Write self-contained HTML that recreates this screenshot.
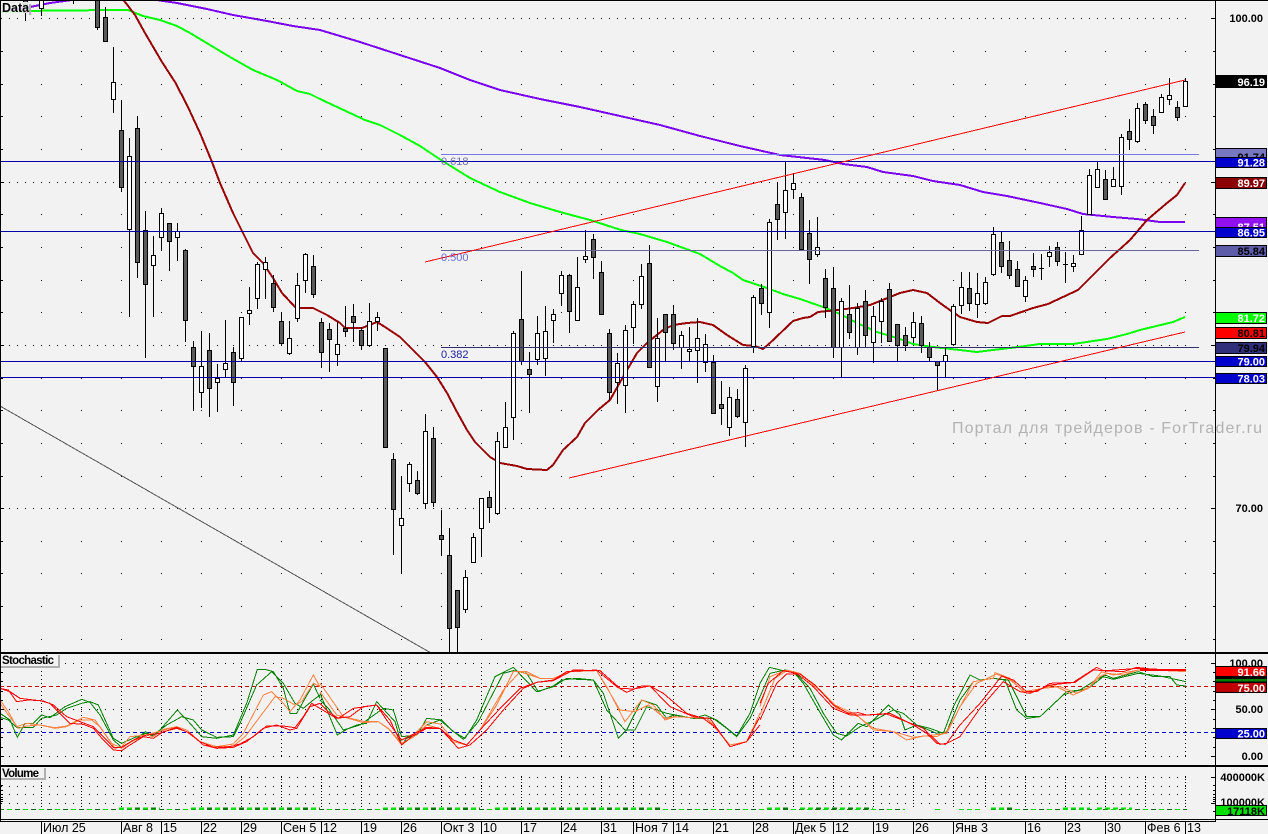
<!DOCTYPE html>
<html><head><meta charset="utf-8"><title>Chart</title>
<style>
html,body{margin:0;padding:0;background:#f2f2f2;overflow:hidden}
svg{display:block}
.l{font:bold 11px "Liberation Sans",sans-serif;text-anchor:end}
.t{font:12.5px "Liberation Sans",sans-serif;fill:#000}
.f{font:11px "Liberation Sans",sans-serif}
.p{font:bold 11.5px "Liberation Sans",sans-serif;fill:#000}
polyline{fill:none;stroke-width:1;vector-effect:non-scaling-stroke}
</style></head><body>
<svg width="1268" height="834" viewBox="0 0 1268 834" xmlns="http://www.w3.org/2000/svg" shape-rendering="crispEdges">
<rect width="1268" height="834" fill="#f2f2f2"/>

<!-- grid main -->
<path id="r" stroke="#000" d="M41 .5h1M81 .5h1M121 .5h1M161 .5h1M201 .5h1M241 .5h1M281 .5h1M321 .5h1M361 .5h1M401 .5h1M441 .5h1M481 .5h1M521 .5h1M561 .5h1M601 .5h1M633 .5h1M673 .5h1M713 .5h1M753 .5h1M793 .5h1M833 .5h1M873 .5h1M913 .5h1M953 .5h1M985 .5h1M1025 .5h1M1065 .5h1M1105 .5h1M1145 .5h1M1185 .5h1"/>
<g>
<use href="#r" y="51"/><use href="#r" y="84"/><use href="#r" y="116"/><use href="#r" y="149"/><use href="#r" y="214"/><use href="#r" y="247"/><use href="#r" y="280"/><use href="#r" y="312"/><use href="#r" y="378"/><use href="#r" y="410"/><use href="#r" y="443"/><use href="#r" y="476"/><use href="#r" y="541"/><use href="#r" y="573"/><use href="#r" y="606"/><use href="#r" y="639"/>
</g>
<path stroke="#000" stroke-dasharray="1 7" fill="none" d="M1 18.5H1190M1 182.5H1190M1 345.5H1190M1 508.5H1190"/>

<text x="952" y="433" font-family="Liberation Sans,sans-serif" font-size="16" fill="#b2b2b2" textLength="310">Портал для трейдеров - ForTrader.ru</text>

<!-- moving averages -->
<g fill="none" stroke-width="2" stroke-linejoin="round">
<polyline style="stroke-width:2" stroke="#7a00f0" points="0,12 30,7 50,3 72,0 75,-2"/>
<polyline style="stroke-width:2" stroke="#7a00f0" points="150,-1 177,3 207,9 233,15 267,21 293,26 320,30 360,42 400,55 440,68 470,80 500,90 540,99 580,107 620,116 660,125 700,136 740,146 780,155 825,160 843,164 867,167 883,172 913,176 933,181 960,185 983,192 1007,196 1040,203 1067,209 1083,214 1113,217 1137,219 1160,222 1185,222"/>
<polyline style="stroke-width:2" stroke="#00ff00" points="0,12 50,10.5 128,10 143,16 160,20 177,26 190,33 210,45 230,57 253,70 277,80 297,91 310,94 320,99 365,120 380,125 400,135 420,146 441,160 470,178 500,192 530,203 560,212 590,220 621,230 640,234 667,242 700,254 720,266 733,273 743,280 767,288 783,294 800,299 823,307 840,314 857,323 877,332 897,338 913,344 933,347 960,350 977,352 993,350 1018,347 1040,344 1073,344 1107,339 1127,334 1140,330 1173,322 1185,317"/>
<polyline style="stroke-width:2" stroke="#990000" points="122,-2 135,15 145,33 162,62 175,82 187,105 200,133 212,162 220,183 233,213 243,233 253,253 263,263 273,278 282,293 295,307 300,308 313,308 327,315 340,323 345,328 362,328 377,322 385,327 400,337 413,350 425,362 437,377 447,393 457,412 467,430 475,442 490,457 500,463 517,466 527,469 547,470 553,465 563,450 577,437 585,423 598,410 610,400 623,377 637,353 647,343 663,330 673,325 687,323 700,322 713,325 727,335 743,345 755,346 763,349 770,343 793,321 803,318 810,317 818,312 838,310 853,308 870,305 880,301 900,293 913,290 927,293 940,303 947,308 960,317 977,322 988,323 1002,316 1010,316 1033,308 1048,304 1063,297 1078,290 1093,275 1110,258 1130,240 1147,220 1167,203 1177,195 1185,183"/>
</g>

<!-- candles wicks -->
<path stroke="#000" fill="none" d="M25.5 0V21M41.5 0V16M73.5 0V4M97.5 0V30M105.5 7V42M113.5 47V113M121.5 100V192M129.5 138V317M137.5 116V278M145.5 211V358M153.5 236V317M161.5 208V251M169.5 223V271M177.5 223V261M185.5 249V342M193.5 341V411M201.5 331V408M209.5 333V417M217.5 364V412M225.5 320V377M233.5 347V406M241.5 317V361M249.5 287V325M257.5 262V309M265.5 257V299M273.5 275V312M281.5 312V346M289.5 321V355M297.5 273V322M305.5 253V293M313.5 255V298M321.5 318V368M329.5 323V372M337.5 322V366M345.5 306V337M353.5 304V342M361.5 327V350M369.5 303V347M377.5 312V331M385.5 348V447M393.5 453V555M401.5 476V573M409.5 462V492M417.5 471V495M425.5 414V509M433.5 427V507M441.5 510V556M449.5 528V653M457.5 590V653M465.5 570V613M473.5 533V563M481.5 498V557M489.5 491V523M497.5 432V515M505.5 402V448M513.5 331V440M521.5 271V365M529.5 352V413M537.5 316V365M545.5 306V376M553.5 309V343M561.5 271V306M569.5 274V333M577.5 257V320M585.5 230V263M593.5 234V279M601.5 261V314M609.5 329V400M617.5 353V404M625.5 325V413M633.5 301V344M641.5 264V309M649.5 245V367M657.5 318V402M665.5 314V361M673.5 305V350M681.5 331V369M689.5 327V361M697.5 318V383M705.5 334V372M713.5 355V413M721.5 381V425M729.5 387V436M737.5 389V418M745.5 365V447M753.5 295V353M761.5 284V315M769.5 219V328M777.5 182V240M785.5 162V239M793.5 173V199M801.5 193V249M809.5 220V284M817.5 217V257M825.5 269V318M833.5 267V358M841.5 298V377M849.5 285V339M857.5 303V355M865.5 290V347M873.5 306V363M881.5 298V343M889.5 283V341M897.5 324V361M905.5 327V351M913.5 312V343M921.5 316V353M929.5 342V361M937.5 361V391M945.5 348V377M953.5 304V344M961.5 272V314M969.5 272V311M977.5 273V318M985.5 277V305M993.5 227V276M1001.5 231V273M1009.5 241V279M1017.5 261V286M1025.5 276V302M1033.5 253V277M1041.5 254V280M1049.5 246V267M1057.5 242V266M1065.5 252V283M1073.5 255V272M1081.5 216V254M1089.5 169V214M1097.5 161V187M1105.5 170V199M1113.5 167V187M1121.5 134V195M1129.5 119V150M1137.5 103V143M1145.5 102V124M1153.5 109V134M1161.5 94V112M1169.5 78V105M1177.5 101V121M1185.5 78V106M1039 268.5h5M1063 264.5h5"/>
<!-- dark bodies -->
<path fill="#5a5a5a" stroke="#000" d="M23.5-1h4V12.5h-4zM95.5-1h4V27.5h-4zM103.5 17.5h4V41.5h-4zM119.5 130.5h4V187.5h-4zM135.5 128.5h4V262.5h-4zM143.5 230.5h4V284.5h-4zM167.5 223.5h4V241.5h-4zM183.5 250.5h4V320.5h-4zM191.5 347.5h4V366.5h-4zM207.5 350.5h4V388.5h-4zM231.5 352.5h4V382.5h-4zM271.5 283.5h4V307.5h-4zM279.5 321.5h4V343.5h-4zM311.5 266.5h4V294.5h-4zM319.5 322.5h4V352.5h-4zM327.5 329.5h4V339.5h-4zM343.5 328.5h4V331.5h-4zM351.5 316.5h4V322.5h-4zM359.5 330.5h4V345.5h-4zM383.5 348.5h4V447.5h-4zM391.5 459.5h4V509.5h-4zM415.5 480.5h4V493.5h-4zM431.5 438.5h4V502.5h-4zM439.5 535.5h4V539.5h-4zM447.5 555.5h4V628.5h-4zM455.5 590.5h4V627.5h-4zM487.5 497.5h4V507.5h-4zM519.5 319.5h4V361.5h-4zM527.5 369.5h4V374.5h-4zM567.5 275.5h4V311.5h-4zM591.5 239.5h4V257.5h-4zM599.5 272.5h4V314.5h-4zM607.5 333.5h4V392.5h-4zM647.5 263.5h4V367.5h-4zM663.5 314.5h4V332.5h-4zM671.5 314.5h4V343.5h-4zM711.5 362.5h4V413.5h-4zM719.5 404.5h4V408.5h-4zM735.5 399.5h4V416.5h-4zM759.5 288.5h4V303.5h-4zM775.5 204.5h4V219.5h-4zM799.5 197.5h4V249.5h-4zM807.5 233.5h4V259.5h-4zM823.5 278.5h4V307.5h-4zM831.5 288.5h4V347.5h-4zM847.5 314.5h4V332.5h-4zM863.5 301.5h4V335.5h-4zM887.5 289.5h4V341.5h-4zM895.5 324.5h4V345.5h-4zM903.5 335.5h4V345.5h-4zM919.5 323.5h4V345.5h-4zM927.5 347.5h4V357.5h-4zM935.5 361.5h4V365.5h-4zM967.5 288.5h4V303.5h-4zM999.5 242.5h4V266.5h-4zM1007.5 260.5h4V275.5h-4zM1015.5 269.5h4V286.5h-4zM1031.5 266.5h4V269.5h-4zM1055.5 247.5h4V261.5h-4zM1103.5 179.5h4V199.5h-4zM1127.5 131.5h4V139.5h-4zM1143.5 104.5h4V120.5h-4zM1151.5 116.5h4V125.5h-4zM1175.5 107.5h4V117.5h-4z"/>
<!-- white bodies -->
<path fill="#fff" stroke="#000" d="M39.5-1h4V8.5h-4zM111.5 82.5h4V99.5h-4zM127.5 156.5h4V229.5h-4zM151.5 255.5h4V265.5h-4zM159.5 213.5h4V237.5h-4zM175.5 231.5h4V237.5h-4zM199.5 366.5h4V392.5h-4zM215.5 378.5h4V382.5h-4zM223.5 363.5h4V369.5h-4zM239.5 317.5h4V358.5h-4zM247.5 310.5h4V313.5h-4zM255.5 264.5h4V298.5h-4zM263.5 262.5h4V269.5h-4zM287.5 338.5h4V353.5h-4zM295.5 285.5h4V318.5h-4zM303.5 254.5h4V280.5h-4zM335.5 344.5h4V354.5h-4zM367.5 321.5h4V345.5h-4zM375.5 317.5h4V321.5h-4zM399.5 518.5h4V525.5h-4zM407.5 464.5h4V483.5h-4zM423.5 431.5h4V503.5h-4zM463.5 577.5h4V609.5h-4zM471.5 537.5h4V562.5h-4zM479.5 498.5h4V528.5h-4zM495.5 441.5h4V513.5h-4zM503.5 427.5h4V447.5h-4zM511.5 333.5h4V417.5h-4zM535.5 333.5h4V359.5h-4zM543.5 331.5h4V358.5h-4zM551.5 314.5h4V320.5h-4zM559.5 275.5h4V293.5h-4zM575.5 287.5h4V320.5h-4zM583.5 256.5h4V259.5h-4zM615.5 363.5h4V382.5h-4zM623.5 330.5h4V385.5h-4zM631.5 304.5h4V327.5h-4zM639.5 276.5h4V304.5h-4zM655.5 338.5h4V386.5h-4zM679.5 335.5h4V347.5h-4zM687.5 349.5h4V351.5h-4zM695.5 338.5h4V350.5h-4zM703.5 344.5h4V362.5h-4zM727.5 397.5h4V427.5h-4zM743.5 368.5h4V422.5h-4zM751.5 297.5h4V346.5h-4zM767.5 222.5h4V312.5h-4zM783.5 190.5h4V212.5h-4zM791.5 183.5h4V189.5h-4zM815.5 247.5h4V254.5h-4zM839.5 301.5h4V347.5h-4zM855.5 308.5h4V347.5h-4zM871.5 316.5h4V342.5h-4zM879.5 301.5h4V321.5h-4zM911.5 322.5h4V337.5h-4zM943.5 355.5h4V361.5h-4zM951.5 306.5h4V344.5h-4zM959.5 287.5h4V305.5h-4zM975.5 293.5h4V304.5h-4zM983.5 282.5h4V303.5h-4zM991.5 234.5h4V274.5h-4zM1023.5 280.5h4V296.5h-4zM1047.5 252.5h4V256.5h-4zM1071.5 263.5h4V266.5h-4zM1079.5 230.5h4V254.5h-4zM1087.5 175.5h4V214.5h-4zM1095.5 169.5h4V187.5h-4zM1111.5 179.5h4V186.5h-4zM1119.5 137.5h4V186.5h-4zM1135.5 108.5h4V141.5h-4zM1159.5 97.5h4V112.5h-4zM1167.5 95.5h4V99.5h-4zM1183.5 81.5h4V106.5h-4z"/>

<!-- objects -->
<path stroke="#0000a8" fill="none" d="M0 161.5H1215M0 231.5H1215M0 361.5H1215M0 377.5H1215"/>
<path stroke="#7878e8" fill="none" d="M441 154.5H1199"/>
<path stroke="#666699" fill="none" d="M441 250.5H1199"/>
<path stroke="#303070" fill="none" d="M441 347.5H1199"/>
<path stroke="#ff0000" fill="none" d="M425 262L1185 80M569 478L1185 332"/>
<path stroke="#555" fill="none" d="M0 406L431 653"/>
<g shape-rendering="auto">
<text class="f" x="441" y="165" fill="#7070b0">0.618</text>
<text class="f" x="441" y="261" fill="#6a6ad8">0.500</text>
<text class="f" x="441" y="358" fill="#2020a0">0.382</text>
</g>

<!-- stochastic pane grid -->
<path stroke="#000" stroke-dasharray="1 7" fill="none" d="M1 663.5H1190M1 709.5H1190M1 756.5H1190"/>
<path stroke="#000" stroke-dasharray="1 3" fill="none" d="M41.5 663V757M81.5 663V757M121.5 663V757M161.5 663V757M201.5 663V757M241.5 663V757M281.5 663V757M321.5 663V757M361.5 663V757M401.5 663V757M441.5 663V757M481.5 663V757M521.5 663V757M561.5 663V757M601.5 663V757M633.5 663V757M673.5 663V757M713.5 663V757M753.5 663V757M793.5 663V757M833.5 663V757M873.5 663V757M913.5 663V757M953.5 663V757M985.5 663V757M1025.5 663V757M1065.5 663V757M1105.5 663V757M1145.5 663V757M1185.5 663V757"/>
<path stroke="#cc0000" stroke-dasharray="4 3" fill="none" d="M0 686.5H1215"/>
<path stroke="#0000cc" stroke-dasharray="4 3" fill="none" d="M0 732.5H1215"/>

<!-- stochastic lines -->
<g transform="translate(0,640) scale(.33333)">
<polyline stroke="#008000" points="0,220 30,240 52,292 75,250 100,250 125,225 150,233 195,200 245,178 270,187 300,225 340,300 365,322 385,310 410,295 437,275 460,290 480,270 532,210 570,250 605,290 650,295 700,285 740,190 772,88 795,88 820,95 850,145 870,220 890,220 940,132 960,175"/>
<polyline stroke="#008000" points="0,232 25,240 50,262 75,262 100,262 125,235 170,225 200,205 245,190 270,185 295,195 320,250 340,295 365,310 410,290 437,280 460,285 500,255 545,230 580,240 605,270 650,292 700,290 720,250 770,135 815,95 850,130 885,190 910,205 940,180 960,165"/>
<polyline stroke="#ff8040" points="0,180 25,215 50,260 80,250 120,255 165,263 200,258 250,232 285,240 320,290 345,325 365,320 390,290 437,285 460,290 490,268 530,260 560,270 600,305 650,320 700,312 730,280 790,165 815,155 850,190 870,215 900,180 940,105 960,140"/>
<polyline stroke="#ff8040" points="0,190 25,225 55,265 80,258 120,255 165,265 200,260 240,240 275,240 300,260 335,310 365,325 395,305 437,285 500,268 530,262 570,280 610,315 650,322 700,318 735,290 825,170 850,175 885,195 905,185 940,130 960,140"/>
<polyline stroke="#ff0000" points="0,145 30,155 60,175 100,180 130,183 160,195 200,230 240,245 280,260 320,300 340,322 365,322 400,300 440,285 480,280 530,262 570,280 610,315 650,325 700,322 740,305 790,265 830,255 870,270 890,265 930,200 960,190"/>
<polyline stroke="#ff0000" points="0,145 25,150 50,185 85,180 120,182 150,190 180,220 210,250 250,253 280,265 310,300 340,330 365,332 385,318 430,290 460,295 490,275 530,265 560,275 600,305 640,322 690,320 720,312 760,290 800,258 850,258 885,263 910,230 935,190 960,205"/>
</g>
<g transform="translate(320,650) scale(.33333)">
<polyline stroke="#008000" points="0,130 25,190 52,255 80,238 110,225 140,220 170,155 225,215 245,285 260,265 295,250 320,205 365,210 400,245 435,265 470,210 525,80 580,52 650,125 700,110 740,85 770,88 820,90 850,130 895,265 920,240 965,150 1010,165 1040,205 1060,195 1120,205 1155,195 1190,210 1250,258 1290,190 1320,100"/>
<polyline stroke="#008000" points="0,150 25,175 70,240 120,225 190,175 220,180 245,260 290,255 320,225 360,210 395,240 430,268 475,215 550,70 580,62 620,70 655,125 700,108 725,90 770,85 820,90 860,180 915,240 945,240 980,170 1040,190 1120,205 1180,205 1220,235 1250,260 1290,205 1320,140"/>
<polyline stroke="#ff8040" points="0,100 25,135 70,200 135,215 175,215 205,235 245,285 270,265 320,215 360,222 400,270 440,285 480,240 530,165 580,65 620,65 660,85 700,85 750,65 830,62 860,110 915,215 965,150 1000,165 1035,210 1065,200 1160,205 1190,235 1230,290 1280,275 1320,190"/>
<polyline stroke="#ff8040" points="0,125 50,195 130,218 175,215 210,240 245,280 280,262 320,225 360,235 400,275 440,285 480,240 550,120 600,65 660,85 700,85 760,62 830,62 900,180 945,185 985,165 1035,205 1060,200 1160,205 1230,285 1280,275 1320,190"/>
<polyline stroke="#ff0000" points="0,160 25,185 55,205 100,175 170,165 200,210 245,270 275,255 320,232 360,235 400,270 440,285 480,240 550,165 600,115 650,97 700,90 740,65 830,60 890,110 920,127 965,108 990,108 1050,170 1120,200 1170,205 1230,290 1280,275 1320,200"/>
<polyline stroke="#ff0000" points="0,175 50,205 90,200 130,170 170,165 210,210 245,285 275,260 320,235 360,235 415,295 450,285 500,240 550,180 610,115 650,97 700,92 760,60 840,62 900,115 940,117 990,108 1030,130 1100,190 1150,205 1190,235 1230,290 1280,275 1320,225"/>
</g>
<g transform="translate(760,650) scale(.33333)">
<polyline stroke="#008000" points="0,100 28,52 70,62 100,65 130,100 170,170 220,255 245,270 295,220 320,230 385,165 420,195 435,240 470,225 510,235 550,250 580,170 630,75 660,90 700,85 735,90 770,180 800,205 840,200 920,125 960,120 1000,95 1035,75 1060,85 1135,65 1180,80 1230,80 1250,105 1278,108"/>
<polyline stroke="#008000" points="0,140 30,70 75,60 110,72 150,115 190,190 230,250 260,258 300,230 345,210 400,180 430,190 470,225 530,250 560,245 600,150 640,95 700,85 745,90 800,200 840,200 910,135 940,125 985,115 1030,80 1060,88 1135,70 1200,78 1278,95"/>
<polyline stroke="#ff8040" points="0,170 30,80 80,60 120,70 180,120 225,165 290,195 340,240 400,245 440,270 490,258 530,260 560,245 590,190 640,95 700,85 705,68 750,85 790,125 850,115 880,105 940,135 985,115 1025,65 1060,75 1135,60 1180,60 1278,62"/>
<polyline stroke="#ff8040" points="0,195 45,85 80,62 120,72 190,130 230,175 295,200 340,235 400,245 460,262 520,255 560,250 600,170 650,100 710,72 750,90 800,130 850,115 900,110 950,130 990,110 1020,80 1040,70 1090,75 1135,60 1180,60 1278,65"/>
<polyline stroke="#ff0000" points="0,160 25,100 70,62 110,70 160,110 220,175 270,195 320,195 380,192 440,215 490,235 540,283 560,280 600,225 660,160 725,78 760,90 800,125 830,125 870,100 940,97 1010,52 1030,62 1090,65 1130,52 1180,58 1278,62"/>
<polyline stroke="#ff0000" points="0,210 50,100 80,72 120,72 165,105 220,165 265,190 295,188 320,195 390,190 460,225 500,250 530,280 555,283 600,260 660,175 730,95 780,125 810,130 870,105 945,97 1000,60 1040,62 1135,55 1278,62"/>
</g>
<path stroke="#ff0000" stroke-width="2" fill="none" d="M1140 670H1186"/>

<!-- volume grid -->
<path stroke="#000" stroke-dasharray="1 7" fill="none" d="M1 777.5H1190M1 786.5H1190M1 794.5H1190M1 803.5H1190"/>
<path stroke="#000" stroke-dasharray="1 2" fill="none" d="M41.5 776V809M81.5 776V809M121.5 776V809M161.5 776V809M201.5 776V809M241.5 776V809M281.5 776V809M321.5 776V809M361.5 776V809M401.5 776V809M441.5 776V809M481.5 776V809M521.5 776V809M561.5 776V809M601.5 776V809M633.5 776V809M673.5 776V809M713.5 776V809M753.5 776V809M793.5 776V809M833.5 776V809M873.5 776V809M913.5 776V809M953.5 776V809M985.5 776V809M1025.5 776V809M1065.5 776V809M1105.5 776V809M1145.5 776V809M1185.5 776V809"/>

<!-- volume bars -->
<path stroke="#00dd00" stroke-dasharray="5 3" fill="none" d="M-1 809.5H905M935 809.5H943M959 809.5H983M991 809.5H1187"/>
<path stroke="#006f00" stroke-dasharray="5 11" fill="none" d="M-1 809.5H905M991 809.5H1187"/>
<path stroke="#00dd00" stroke-width="2" stroke-dasharray="5 3" fill="none" d="M119 808.5H160M191 808.5H320M383 808.5H480M495 808.5H660M767 808.5H788M800 808.5H873M991 808.5H1012M1063 808.5H1090M1097 808.5H1132"/>
<path stroke="#007a00" stroke-width="2" stroke-dasharray="5 11" fill="none" d="M135 808.5H160M207 808.5H320M399 808.5H480M511 808.5H660M783 808.5H788M816 808.5H873M1007 808.5H1012"/>

<!-- panel separators -->
<rect x="0" y="652" width="1268" height="2" fill="#000"/>
<rect x="0" y="765" width="1268" height="2" fill="#000"/>
<rect x="0" y="0" width="1268" height="1" fill="#000"/>
<path stroke="#000" fill="none" d="M0 819.5H1268M0 821.5H1215M.5 0V822M1215.5 0V822"/>

<!-- left ticks -->
<path stroke="#000" fill="none" d="M0 51.5h3M0 84.5h3M0 116.5h3M0 149.5h3M0 182.5h4M0 214.5h3M0 247.5h3M0 280.5h3M0 312.5h3M0 345.5h4M0 378.5h3M0 410.5h3M0 443.5h3M0 476.5h3M0 508.5h4M0 541.5h3M0 573.5h3M0 606.5h3M0 639.5h3M0 672.5h3M0 681.5h3M0 691.5h3M0 700.5h3M0 709.5h4M0 719.5h3M0 728.5h3M0 737.5h3M0 747.5h3M0 756.5h4M0 777.5h3M0 785.5h3M0 790.5h3M0 794.5h3M0 797.5h3M0 799.5h3M0 801.5h3"/>
<!-- right ticks -->
<path stroke="#000" fill="none" d="M1211 18.5h4M1213 51.5h2M1213 84.5h2M1213 116.5h2M1213 149.5h2M1211 182.5h4M1213 214.5h2M1213 247.5h2M1213 280.5h2M1213 312.5h2M1211 345.5h4M1213 378.5h2M1213 410.5h2M1213 443.5h2M1213 476.5h2M1211 508.5h4M1213 541.5h2M1213 573.5h2M1213 606.5h2M1213 639.5h2M1211 663.5h4M1213 672.5h2M1213 681.5h2M1213 691.5h2M1213 700.5h2M1211 709.5h4M1213 719.5h2M1213 728.5h2M1213 737.5h2M1213 747.5h2M1211 756.5h4M1211 777.5h4M1213 785.5h2M1213 790.5h2M1213 794.5h2M1213 797.5h2M1213 799.5h2M1213 801.5h2M1211 803.5h4M1213 811.5h2"/>

<!-- time axis -->
<path stroke="#000" fill="none" d="M41.5 822V834M121.5 822V834M161.5 822V834M201.5 822V834M241.5 822V834M281.5 822V834M321.5 822V834M361.5 822V834M401.5 822V834M441.5 822V834M481.5 822V834M521.5 822V834M561.5 822V834M601.5 822V834M633.5 822V834M673.5 822V834M713.5 822V834M753.5 822V834M793.5 822V834M833.5 822V834M873.5 822V834M913.5 822V834M953.5 822V834M1025.5 822V834M1065.5 822V834M1105.5 822V834M1145.5 822V834M1185.5 822V834"/>
<g shape-rendering="auto">
<text class="t" x="43" y="832">Июл 25</text><text class="t" x="123" y="832">Авг 8</text><text class="t" x="163" y="832">15</text><text class="t" x="203" y="832">22</text><text class="t" x="243" y="832">29</text><text class="t" x="283" y="832">Сен 5</text><text class="t" x="323" y="832">12</text><text class="t" x="363" y="832">19</text><text class="t" x="403" y="832">26</text><text class="t" x="443" y="832">Окт 3</text><text class="t" x="483" y="832">10</text><text class="t" x="523" y="832">17</text><text class="t" x="563" y="832">24</text><text class="t" x="603" y="832">31</text><text class="t" x="635" y="832">Ноя 7</text><text class="t" x="675" y="832">14</text><text class="t" x="715" y="832">21</text><text class="t" x="755" y="832">28</text><text class="t" x="795" y="832">Дек 5</text><text class="t" x="835" y="832">12</text><text class="t" x="875" y="832">19</text><text class="t" x="915" y="832">26</text><text class="t" x="955" y="832">Янв 3</text><text class="t" x="1027" y="832">16</text><text class="t" x="1067" y="832">23</text><text class="t" x="1107" y="832">30</text><text class="t" x="1147" y="832">Фев 6</text><text class="t" x="1187" y="832">13</text>
</g>

<!-- panel labels -->
<path d="M1 2H29V15H31V4H29z" fill="#b0b0b0"/>
<rect x="1" y="2" width="28" height="11" fill="#f2f2f2" opacity=".85"/>
<path fill="#b0b0b0" d="M1 666h57v-11h2v13h-59z"/>
<rect x="1" y="655" width="57" height="11" fill="#f2f2f2"/>
<path fill="#b0b0b0" d="M1 778h43v-10h2v12h-45z"/>
<rect x="1" y="768" width="43" height="10" fill="#f2f2f2"/>
<g shape-rendering="auto">
<svg x="0" y="0" width="29" height="16"><text class="p" x="2" y="12" style="font-size:12.5px">Data:</text></svg>
<text class="p" x="2" y="664" textLength="52">Stochastic</text>
<text class="p" x="2" y="777" textLength="37">Volume</text>
</g>

<!-- static axis labels -->
<g shape-rendering="auto">
<text class="l" x="1263" y="22" fill="#000">100.00</text>
<text class="l" x="1263" y="512" fill="#000">70.00</text>
<text class="l" x="1263" y="667" fill="#000">100.00</text>
<text class="l" x="1263" y="713" fill="#000">50.00</text>
<text class="l" x="1263" y="760" fill="#000">0.00</text>
<text class="l" x="1265" y="781" fill="#000">400000K</text>
<text class="l" x="1265" y="806" fill="#000">100000K</text>
</g>

<!-- price tags -->
<g stroke="#000">
<rect x="1215.5" y="75.5" width="51" height="12" fill="#000"/>
<rect x="1215.5" y="148.5" width="51" height="12" fill="#7878c0"/>
<rect x="1215.5" y="177.5" width="51" height="11" fill="#8b0000"/>
<rect x="1215.5" y="217.5" width="51" height="12" fill="#9010f0"/>
<rect x="1215.5" y="245.5" width="51" height="11" fill="#5c5ca8"/>
<rect x="1215.5" y="312.5" width="51" height="11" fill="#00ff00"/>
<rect x="1215.5" y="327.5" width="51" height="11" fill="#ff0000"/>
<rect x="1215.5" y="342.5" width="51" height="11" fill="#30307a"/>
<rect x="1215.5" y="666.5" width="51" height="10" fill="#ff0000"/>
<rect x="1215.5" y="676.5" width="51" height="5" fill="#000"/>
<rect x="1215.5" y="679" width="51" height="2.5" fill="#008000" stroke="none"/>
<rect x="1215.5" y="682.5" width="51" height="10" fill="#c00000"/>
<rect x="1215.5" y="728.5" width="51" height="10" fill="#0000cc"/>
<rect x="1215.5" y="805.5" width="51" height="10" fill="#00e000"/>
</g>
<g shape-rendering="auto">
<svg x="1216" y="149" width="50" height="8"><text class="l" x="49" y="12" fill="#000">91.74</text></svg>
<svg x="1216" y="218" width="50" height="9"><text class="l" x="49" y="13" fill="#fff">87.51</text></svg>
</g>
<g stroke="#000">
<rect x="1215.5" y="157.5" width="51" height="10" fill="#0000cc"/>
<rect x="1215.5" y="227.5" width="51" height="10" fill="#0000cc"/>
<rect x="1215.5" y="356.5" width="51" height="10" fill="#0000cc"/>
<rect x="1215.5" y="373.5" width="51" height="10" fill="#0000cc"/>
</g>
<g shape-rendering="auto">
<text class="l" x="1265" y="86" fill="#fff">96.19</text>
<text class="l" x="1265" y="166.5" fill="#fff">91.28</text>
<text class="l" x="1265" y="187" fill="#fff">89.97</text>
<text class="l" x="1265" y="236.5" fill="#fff">86.95</text>
<text class="l" x="1265" y="255" fill="#000">85.84</text>
<text class="l" x="1265" y="322" fill="#fff">81.72</text>
<text class="l" x="1265" y="337" fill="#000">80.81</text>
<text class="l" x="1265" y="352" fill="#000">79.94</text>
<text class="l" x="1265" y="365.5" fill="#fff">79.00</text>
<text class="l" x="1265" y="382.5" fill="#fff">78.03</text>
<text class="l" x="1265" y="676" fill="#fff">91.66</text>
<text class="l" x="1265" y="692" fill="#fff">75.00</text>
<text class="l" x="1265" y="737.5" fill="#fff">25.00</text>
<text class="l" x="1265" y="815" fill="#000">17118K</text>
</g>
</svg>
</body></html>
